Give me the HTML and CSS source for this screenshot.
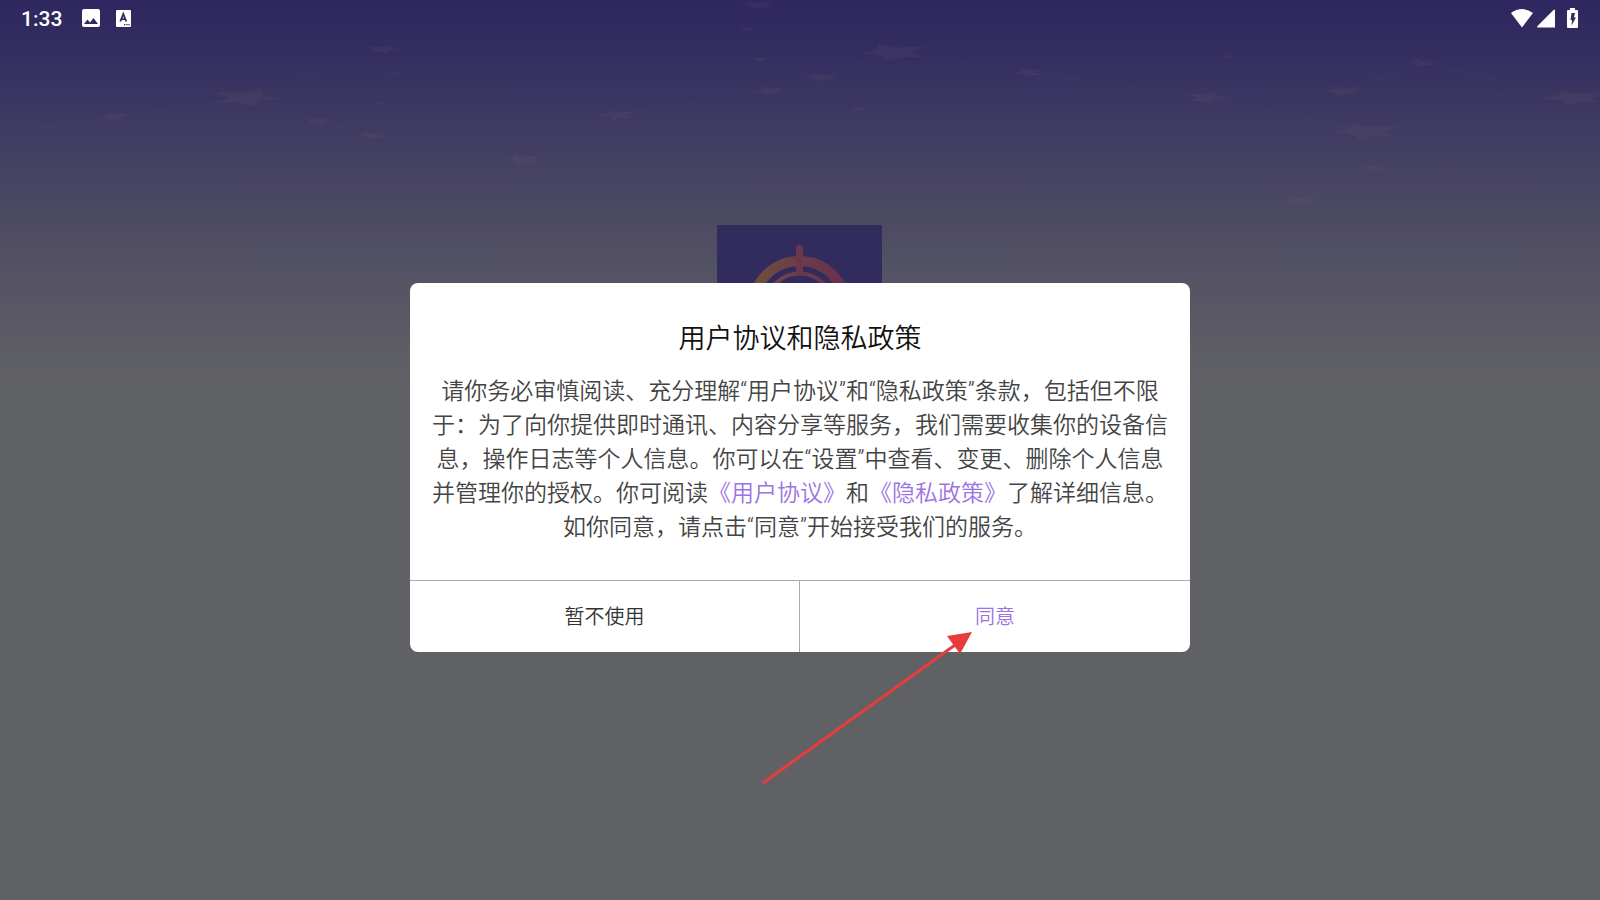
FILE: index.html
```
<!DOCTYPE html>
<html lang="zh-CN">
<head>
    <meta charset="UTF-8">
    <meta name="viewport" content="width=device-width, initial-scale=1.0">
    <title>用户协议和隐私政策</title>
    <link rel="stylesheet" href="styles.css">
</head>
<body>
    <!-- 星空背景 -->
    <svg class="sky" viewBox="0 0 1600 300" preserveAspectRatio="none" aria-hidden="true">
        <defs>
            <path id="star" d="M-33 1L-15-3L-13-9L0-5L35-6L20 0L30 5L10 5L-5 9L-12 3Z"/>
        </defs>
        <g class="sky-lines">
            <path d="M0 139L113 121L248 101L384 51M248 101L320 125L371 140L522 165"/>
            <path d="M755 5L892 54L1028 75L1208 101L1365 136M892 54L821 80L768 94L616 119"/>
            <path d="M1422 65L1342 94L1572 101L1422 65M1342 94L1365 136L1300 208"/>
        </g>
        <g class="sky-stars">
            <use href="#star" transform="translate(113 121) scale(.42 .5)"/>
            <use href="#star" transform="translate(248 101) scale(-1 1)"/>
            <use href="#star" transform="translate(384 51) scale(-.55 .5)"/>
            <use href="#star" transform="translate(320 125) scale(-.48 .5)"/>
            <use href="#star" transform="translate(371 140) scale(.48 .5)"/>
            <use href="#star" transform="translate(522 165) scale(.55 .6)"/>
            <use href="#star" transform="translate(755 5) scale(.55 .5)"/>
            <use href="#star" transform="translate(892 54)"/>
            <use href="#star" transform="translate(821 80) scale(.55 .5)"/>
            <use href="#star" transform="translate(768 94) scale(.48 .5)"/>
            <use href="#star" transform="translate(616 119) scale(.6 .6)"/>
            <use href="#star" transform="translate(1028 75) scale(.42 .5)"/>
            <use href="#star" transform="translate(1208 101) scale(-.62 .7)"/>
            <use href="#star" transform="translate(1422 65) scale(.48 .5)"/>
            <use href="#star" transform="translate(1342 94) scale(.62 .6)"/>
            <use href="#star" transform="translate(1572 101) scale(.9 .9)"/>
            <use href="#star" transform="translate(1365 136)"/>
            <use href="#star" transform="translate(1300 208) scale(.48 .5)"/>
            <ellipse cx="393" cy="76" rx="7" ry="1"/>
            <ellipse cx="380" cy="107" rx="5" ry="1"/>
            <ellipse cx="747" cy="30" rx="6" ry="2"/>
            <ellipse cx="760" cy="61" rx="5" ry="2"/>
            <ellipse cx="858" cy="113" rx="5" ry="2"/>
            <ellipse cx="1088" cy="118" rx="5" ry="1"/>
            <ellipse cx="1227" cy="59" rx="5" ry="2"/>
            <ellipse cx="1373" cy="174" rx="9" ry="3"/>
            <ellipse cx="1448" cy="174" rx="6" ry="1"/>
        </g>
    </svg>

    <header class="status-bar">
        <div class="status-left">
            <span class="time">1:33</span>
            <svg class="icon" width="18" height="18" viewBox="0 0 18 18" aria-hidden="true">
                <rect width="18" height="18" rx="2" fill="#fff"/>
                <path d="M2 15L5.500 10.500L8 13.500L11.500 9L16 15Z" fill="#322b60"/>
            </svg>
            <svg class="icon keyboard" width="15" height="17" viewBox="0 0 15 17" aria-hidden="true">
                <rect width="15" height="17" rx="1" fill="#fff"/>
                <path d="M4.300 11.500L7.300 4L10.300 11.500M5.500 9.200H9" fill="none" stroke="#322b60" stroke-width="1.800"/>
                <path d="M8 14h1.300v1.300H8zM10.300 14h1.300v1.300h-1.300zM12.500 14h1.300v1.300h-1.300z" fill="#322b60"/>
            </svg>
        </div>
        <div class="status-right">
            <svg width="24" height="20" viewBox="0 0 24 20" aria-hidden="true">
                <path d="M1 5Q12-3 23 5L12 19.500Z" fill="#fff"/>
            </svg>
            <svg width="18" height="20" viewBox="0 0 18 20" aria-hidden="true">
                <path d="M18 2V19.500H1Q-.5 19.500 .5 18L16.500 2Q17.500 1 18 2Z" fill="#fff"/>
            </svg>
            <svg class="battery" width="11" height="20" viewBox="0 0 11 20" aria-hidden="true">
                <path d="M3 0H8V2H10Q11 2 11 3V19Q11 20 10 20H1Q0 20 0 19V3Q0 2 1 2H3Z" fill="#fff"/>
                <path d="M4.500 5H8L7 9.500H9L4.500 17.500L5 12H3.500Z" fill="#322b60"/>
            </svg>
        </div>
    </header>

    <main class="splash">
        <svg class="logo" width="165" height="165" viewBox="0 0 165 165" aria-hidden="true">
            <defs>
                <linearGradient id="wheel" gradientUnits="userSpaceOnUse" x1="30" y1="60" x2="135" y2="60">
                    <stop offset="0" stop-color="#71503a"/>
                    <stop offset=".5" stop-color="#6b3d4a"/>
                    <stop offset="1" stop-color="#692c50"/>
                </linearGradient>
            </defs>
            <rect width="165" height="165" fill="#312b5e"/>
            <g fill="none" stroke="url(#wheel)">
                <circle cx="82.500" cy="82.500" r="46.500" stroke-width="10"/>
                <circle cx="82.500" cy="82.500" r="34" stroke-width="4"/>
            </g>
            <rect x="79" y="20" width="7" height="30" rx="3" fill="#6b374a"/>
            <rect x="79" y="115" width="7" height="30" rx="3" fill="#6b374a"/>
        </svg>
    </main>

    <div class="overlay">
        <section class="dialog" role="dialog" aria-labelledby="dialogTitle">
            <div class="dialog-body">
                <h1 class="title" id="dialogTitle">用户协议和隐私政策</h1>
                <p class="message">请你务必审慎阅读、充分理解“用户协议”和“隐私政策”条款，包括但不限于：为了向你提供即时通讯、内容分享等服务，我们需要收集你的设备信息，操作日志等个人信息。你可以在“设置”中查看、变更、删除个人信息并管理你的授权。你可阅读<a href="#agreement">《用户协议》</a>和<a href="#privacy">《隐私政策》</a>了解详细信息。如你同意，请点击“同意”开始接受我们的服务。</p>
            </div>
            <div class="actions">
                <button type="button" class="button">暂不使用</button>
                <button type="button" class="button agree">同意</button>
            </div>
            <!-- 指向“同意”按钮的箭头 -->
            <svg class="arrow" width="212" height="156" viewBox="0 0 212 156" aria-hidden="true">
                <path d="M2 153L194 15" stroke="#e63d3c" stroke-width="3"/>
                <path d="M211 2L186 6L199 24Z" fill="#e63d3c"/>
            </svg>
        </section>
    </div>
</body>
</html>
```
FILE: styles.css
```
* {
    box-sizing: border-box;
}

body {
    margin: 0;
    min-height: 100vh;
    background: #606165 linear-gradient(#2f2760 0, #322c60 40px, #4b4863 205px, #5a5965 320px, #606165 385px) no-repeat;
    font-family: Roboto, "Noto Sans CJK SC", sans-serif;
    overflow: hidden;
    position: relative;
}

.sky {
    position: absolute;
    top: 0;
    left: 0;
    width: 100%;
    height: 290px;
}

.sky-stars {
    fill: rgba(150, 130, 110, 0.08);
}

.sky-lines {
    fill: none;
    stroke: rgba(150, 130, 110, 0.05);
}

.status-bar {
    position: relative;
    display: flex;
    justify-content: space-between;
    align-items: center;
    height: 36px;
    padding: 0 22px 0 21px;
}

.status-left,
.status-right {
    display: flex;
    align-items: center;
}

.time {
    margin-right: 20px;
    padding-top: 1px;
    color: #fff;
    font-size: 21px;
    font-weight: 500;
    line-height: 36px;
}

.keyboard {
    margin-left: 16px;
}

.status-right {
    gap: 3px;
}

.battery {
    margin-left: 9px;
}

.splash {
    display: flex;
    justify-content: center;
    padding: 189px 1px 0 0;
}

.logo {
    display: block;
}

.overlay {
    position: absolute;
    top: 0;
    left: 0;
    width: 100%;
    height: 100%;
    padding: 34px 20px 0;
    display: flex;
    justify-content: center;
    align-items: center;
}

.dialog {
    position: relative;
    width: 100%;
    max-width: 780px;
    background: #fff;
    border-radius: 8px;
}

.dialog-body {
    padding: 34px 20px 35px;
    text-align: center;
}

.title {
    margin: 0 0 14px;
    color: #111;
    font-size: 27px;
    font-weight: 350;
    line-height: 44px;
}

.message {
    margin: 0;
    color: #444;
    font-size: 23px;
    font-weight: 350;
    line-height: 34px;
}

.message a {
    color: #9c72e4;
    text-decoration: none;
}

.actions {
    display: flex;
    border-top: 1px solid #aaa;
}

.button {
    width: 50%;
    height: 71px;
    padding: 0 0 2px;
    background: none;
    border: none;
    border-right: 1px solid #aaa;
    color: #333;
    font-family: inherit;
    font-size: 20px;
    font-weight: 350;
    cursor: pointer;
}

.button.agree {
    border-right: none;
    color: #9c72e4;
}

.arrow {
    position: absolute;
    left: 72%;
    top: 100%;
    margin: -22px 0 0 -211px;
    pointer-events: none;
}
```
